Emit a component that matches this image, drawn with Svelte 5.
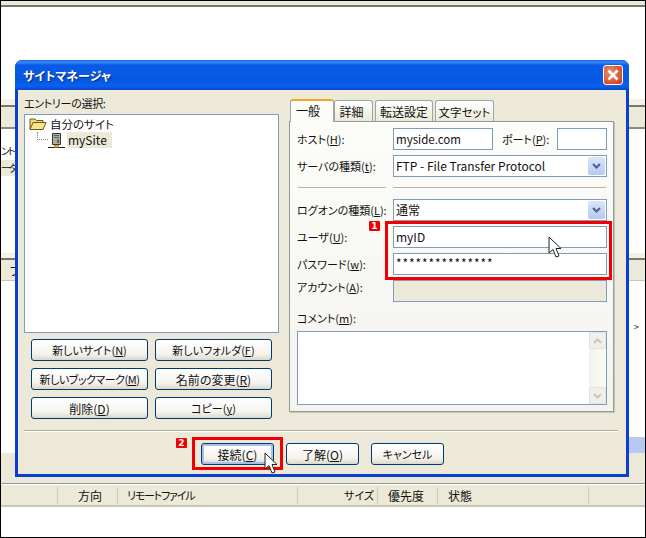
<script>
  const leftButtons = [
    { a: '新しいサイト(', k: 'N' },
    { a: '新しいフォルダ(', k: 'F' },
    { a: '新しいブックマーク(', k: 'M', tight: true },
    { a: '名前の変更(', k: 'R', kanji: true },
    { a: '削除(', k: 'D', kanji: true },
    { a: 'コピー(', k: 'y' }
  ];
  const tabs = ['一般', '詳細', '転送設定', '文字セット'];
</script>

{#snippet cursor()}
  <svg class="cursor" width="15" height="24" viewBox="0 0 15 24">
    <path d="M1 1 L1 17 L5 13.5 L8 21 L11 20 L8 12.5 L13 12.5 Z" fill="#fff" stroke="#222" stroke-width="1" />
  </svg>
{/snippet}

{#snippet arrow()}
  <span class="drop">
    <svg width="9" height="6" viewBox="0 0 9 6"><path d="M1 1 L4.5 4.5 L8 1" fill="none" stroke="#4d6185" stroke-width="2" /></svg>
  </span>
{/snippet}

<div class="screen">
  <div class="top-strip"></div>

  <div class="band-top"></div>
  <div class="back-pane">
    <div class="back-row">ント</div>
    <div class="back-row shaded">ータ</div>
  </div>
  <div class="band-mid"><span>フ</span></div>
  <div class="back-lower">
    <span class="chevron">&gt;</span>
  </div>
  <div class="back-select"></div>
  <div class="back-beige"></div>
  <div class="queue-head">
    <span class="col c0"></span>
    <span class="col c1">方向</span>
    <span class="col c2">リモートファイル</span>
    <span class="col c3">サイズ</span>
    <span class="col c4">優先度</span>
    <span class="col c5">状態</span>
  </div>

  <section class="dialog">
    <header class="title">
      <h1>サイトマネージャ</h1>
      <span class="close">
        <svg width="14" height="14" viewBox="0 0 14 14"><path d="M2.5 2.5 L11.5 11.5 M11.5 2.5 L2.5 11.5" stroke="#fff" stroke-width="2.6" /></svg>
      </span>
    </header>

    <div class="body">
      <div class="columns">
        <div class="left">
          <div class="entry-label">エントリーの選択:</div>
          <div class="tree">
            <div class="node">
              <svg width="18" height="14" viewBox="0 0 18 14">
                <path d="M1 12 V2 H6 L7.5 3.5 H14 V5" fill="#f3dc7c" stroke="#6b5a16" />
                <path d="M1 12.5 L4 5.5 H17 L14 12.5 Z" fill="#f8e48c" stroke="#6b5a16" />
              </svg>
              <span>自分のサイト</span>
            </div>
            <div class="node child">
              <span class="dots"></span>
              <svg width="17" height="16" viewBox="0 0 17 16">
                <path d="M4.5 1.5 H12.5 V12.5 H4.5 Z" fill="#a9aeaa" stroke="#34383a" />
                <path d="M6 3.5 H11 M6 5.5 H11" stroke="#5c6062" />
                <rect x="9" y="7" width="2" height="2" fill="#19b01e" />
                <rect x="9" y="9" width="2" height="2" fill="#d7261e" />
                <path d="M0 15.5 H17" stroke="#222" />
                <rect x="6.5" y="13" width="4" height="2.5" fill="#e0b93a" stroke="#6b5a16" stroke-width=".5" />
              </svg>
              <span class="picked">mySite</span>
            </div>
          </div>
          <div class="site-buttons">
            {#each leftButtons as b}
              <button type="button" class:tight={b.tight} class:kanji={b.kanji}>{b.a}<u>{b.k}</u>)</button>
            {/each}
          </div>
        </div>

        <div class="right">
          <div class="tabs">
            {#each tabs as tab, i}
              <span class="tab t{i}" class:active={i === 0}>{tab}</span>
            {/each}
          </div>
          <div class="panel">
            <div class="row">
              <span class="lbl">ホスト(<u>H</u>):</span>
              <span class="field host">myside.com</span>
              <span class="lbl port">ポート(<u>P</u>):</span>
              <span class="field portbox"></span>
            </div>
            <div class="row">
              <span class="lbl">サーバの種類(<u>t</u>):</span>
              <span class="field grow">FTP - File Transfer Protocol{@render arrow()}</span>
            </div>
            <div class="seps"><i></i><i></i></div>
            <div class="row">
              <span class="lbl">ログオンの種類(<u>L</u>):</span>
              <span class="field grow">通常{@render arrow()}</span>
            </div>
            <div class="row">
              <span class="lbl">ユーザ(<u>U</u>):</span>
              <span class="field grow">myID</span>
            </div>
            <div class="row">
              <span class="lbl">パスワード(<u>w</u>):</span>
              <span class="field grow stars">***************</span>
            </div>
            <div class="row">
              <span class="lbl raised">アカウント(<u>A</u>):</span>
              <span class="field grow off"></span>
            </div>
            <div class="comment-label">コメント(<u>m</u>):</div>
            <div class="comment">
              <div class="scroll">
                <span class="sb-btn">
                  <svg width="9" height="6" viewBox="0 0 9 6"><path d="M1 5 L4.5 1.5 L8 5" fill="none" stroke="#c6c6be" stroke-width="2" /></svg>
                </span>
                <span class="sb-btn">
                  <svg width="9" height="6" viewBox="0 0 9 6"><path d="M1 1 L4.5 4.5 L8 1" fill="none" stroke="#c6c6be" stroke-width="2" /></svg>
                </span>
              </div>
            </div>
          </div>
        </div>
      </div>

      <div class="rule"></div>
      <div class="actions">
        <button type="button" class="focus kanji">接続(<u>C</u>)</button>
        <button type="button" class="kanji">了解(<u>O</u>)</button>
        <button type="button">キャンセル</button>
      </div>
    </div>
  </section>

  <div class="redbox one"></div>
  <span class="badge b1">1</span>
  <div class="redbox two"></div>
  <span class="badge b2">2</span>
  <div class="cursor-at a">{@render cursor()}</div>
  <div class="cursor-at b">{@render cursor()}</div>
</div>

<style>
  :global(body) {
    margin: 0;
    background: #fff;
  }

  .screen {
    position: relative;
    width: 646px;
    height: 538px;
    box-sizing: border-box;
    border: 1px solid #000;
    background: #fff;
    overflow: hidden;
    font-family: "Noto Sans CJK JP", "Noto Sans", sans-serif;
    font-feature-settings: "palt";
    font-size: 12px;
    color: #111;
    display: flex;
    flex-direction: column;
  }

  .top-strip {
    height: 4px;
    background: #ece9d8;
    border-bottom: 2px solid #77776e;
    flex: none;
    box-sizing: content-box;
  }

  .band-top {
    margin-top: 92px;
    height: 30px;
    box-sizing: border-box;
    flex: none;
    background: linear-gradient(#f4f2e6 0 6px, #77776e 6px 8px, #ece9d8 8px);
    border-bottom: 2px solid #8a8a80;
  }

  .back-pane {
    height: 124px;
    padding-top: 14px;
    box-sizing: border-box;
    flex: none;
  }

  .back-row {
    width: 14px;
    height: 16px;
    white-space: nowrap;
    font-size: 10px;
    letter-spacing: -2px;
    line-height: 16px;
  }

  .shaded {
    margin-top: 1px;
    background: #ece9d8;
  }

  .band-mid {
    height: 28px;
    box-sizing: border-box;
    flex: none;
    padding: 9px 0 0 9px;
    line-height: 18px;
    background: linear-gradient(#f4f2e6 0 5px, #77776e 5px 7px, #ece9d8 7px);
    border-bottom: 1px solid #c9c6b6;
  }

  .back-lower {
    height: 156px;
    position: relative;
    flex: none;
  }

  .chevron {
    position: absolute;
    right: 6px;
    top: 40px;
    font-size: 9px;
    line-height: 12px;
  }

  .back-select {
    height: 16px;
    box-sizing: border-box;
    margin-left: 600px;
    background: #b8c8f4;
    border-top: 1px solid #c8c8d0;
    flex: none;
  }

  .back-beige {
    height: 31px;
    box-sizing: border-box;
    background: #ece9d8;
    border-bottom: 1px solid #8f9aa0;
    flex: none;
  }

  .queue-head {
    display: flex;
    align-items: center;
    height: 23px;
    box-sizing: border-box;
    background: #ece9d8;
    border-top: 1px solid #fff;
    border-bottom: 2px solid #c9c6b6;
    flex: none;
  }

  .col {
    height: 17px;
    line-height: 17px;
    box-sizing: border-box;
    border-right: 1px solid #cfccbc;
    white-space: nowrap;
    flex: none;
  }

  .c0 { width: 57px; }
  .c1 { width: 60px; padding-left: 20px; }
  .c2 { width: 180px; padding-left: 9px; font-size: 11px; letter-spacing: -1.2px; }
  .c3 { width: 80px; padding-left: 46px; font-size: 11px; }
  .c4 { width: 60px; padding-left: 10px; }
  .c5 { width: 151px; padding-left: 10px; }

  .dialog {
    position: absolute;
    left: 14px;
    top: 59px;
    width: 614px;
    height: 417px;
    box-sizing: border-box;
    background: #0a3fd0;
    border-radius: 7px 7px 0 0;
    display: flex;
    flex-direction: column;
    padding: 0 3px 3px;
  }

  .title {
    margin: 0 -3px;
    height: 30px;
    flex: none;
    border-radius: 7px 7px 0 0;
    background: linear-gradient(#0a5fe4 0, #3c8cf4 2px, #0a5ae8 5px, #0658e0 20px, #0a60f0 26px, #0a46c8 30px);
    display: flex;
    align-items: center;
    justify-content: space-between;
    padding: 0 6px 0 8px;
  }

  h1 {
    margin: 0;
    font-size: 12px;
    font-weight: 700;
    color: #fff;
    text-shadow: 1px 1px 1px #0a2a80;
  }

  .close {
    width: 20px;
    height: 20px;
    box-sizing: border-box;
    border: 1px solid #fff;
    border-radius: 3px;
    background: radial-gradient(circle at 35% 35%, #e8906c, #d8502c 70%, #c03c18);
    display: flex;
    align-items: center;
    justify-content: center;
  }

  .body {
    flex: 1;
    background: #ece9d8;
    padding: 3px 6px 0;
    display: flex;
    flex-direction: column;
  }

  .columns {
    display: flex;
    height: 336px;
    flex: none;
  }

  .left {
    width: 255px;
    flex: none;
    font-size: 11px;
  }

  .entry-label {
    height: 21px;
    line-height: 20px;
    letter-spacing: -.3px;
  }

  .tree {
    height: 219px;
    box-sizing: border-box;
    background: #fff;
    border: 1px solid #7f9db9;
    padding: 1px 4px;
    font-size: 11.5px;
  }

  .node {
    display: flex;
    align-items: center;
    height: 16px;
    gap: 3px;
  }

  .child {
    padding-left: 8px;
    gap: 0;
    font-size: 12px;
  }

  .dots {
    width: 11px;
    height: 8px;
    align-self: flex-start;
    box-sizing: border-box;
    border-left: 1px dotted #888;
    border-bottom: 1px dotted #888;
  }

  .picked {
    background: #ece9d8;
    margin-left: 2px;
    padding: 0 5px 0 1px;
    line-height: 16px;
  }

  .site-buttons {
    display: grid;
    grid-template-columns: 117px 117px;
    grid-auto-rows: 22px;
    gap: 7px;
    padding: 6px 0 0 7px;
  }

  button {
    font: inherit;
    font-size: 11px;
    font-feature-settings: inherit;
    color: inherit;
    padding: 0;
    border: 1px solid #003c74;
    border-radius: 3px;
    background: linear-gradient(#fff, #f4f3ee 70%, #dcd8c8);
    white-space: nowrap;
  }

  button.tight {
    letter-spacing: -.5px;
  }

  button.kanji {
    font-size: 12px;
  }

  .right {
    margin-left: 10px;
    width: 325px;
    flex: none;
    display: flex;
    flex-direction: column;
    padding-top: 7px;
  }

  .tabs {
    display: flex;
    height: 21px;
    position: relative;
    z-index: 1;
    padding-left: 1px;
    flex: none;
  }

  .tab {
    height: 21px;
    line-height: 22px;
    text-align: center;
    box-sizing: border-box;
    border: 1px solid #9aa7a8;
    border-bottom: none;
    border-radius: 3px 3px 0 0;
    background: linear-gradient(#fff, #ece9d8);
    flex: none;
  }

  .t0 { width: 44px; padding-right: 8px; }
  .t1 { width: 39px; padding-right: 4px; }
  .t2 { width: 58px; margin-left: 2px; }
  .t3 { width: 59px; margin-left: 2px; font-size: 11.5px; }

  .active {
    height: 23px;
    margin-top: -1px;
    background: #fcfcf9;
    border-top: 2px solid #f5a623;
    line-height: 20px;
  }

  .panel {
    height: 291px;
    box-sizing: border-box;
    border: 1px solid #919b9c;
    box-shadow: 1px 1px 0 #c8c5b4;
    background: linear-gradient(#fcfcf9, #f4f3ee);
    padding: 6px 6px 0 7px;
    flex: none;
  }

  .row {
    display: flex;
    align-items: center;
    height: 22px;
    margin-bottom: 5px;
  }

  .lbl {
    width: 96px;
    flex: none;
    white-space: nowrap;
    font-size: 11px;
  }

  .raised {
    padding-bottom: 8px;
  }

  .port {
    width: auto;
    margin: 0 auto 0 9px;
  }

  .field {
    height: 22px;
    line-height: 20px;
    box-sizing: border-box;
    border: 1px solid #7f9db9;
    background: #fff;
    padding: 0 2px;
    position: relative;
  }

  .host { width: 100px; font-size: 11.5px; }
  .portbox { width: 50px; }
  .grow { flex: 1; }
  .off { background: #ece9d8; }
  .stars { letter-spacing: .9px; line-height: 17px; }

  .drop {
    position: absolute;
    right: 1px;
    top: 1px;
    width: 17px;
    height: 18px;
    border-radius: 2px;
    background: linear-gradient(#dbe5fb, #b6c8f2);
    display: flex;
    align-items: center;
    justify-content: center;
  }

  .seps {
    display: flex;
    gap: 7px;
    height: 17px;
    padding-top: 5px;
    box-sizing: border-box;
  }

  .seps i {
    height: 1px;
    background: #b4b2a4;
    box-shadow: 0 1px 0 #fff;
  }

  .seps i:first-child { width: 88px; margin-left: 1px; }
  .seps i:last-child { width: 213px; }

  .comment-label {
    height: 24px;
    line-height: 22px;
    font-size: 11px;
  }

  .comment {
    height: 74px;
    width: 310px;
    box-sizing: border-box;
    border: 1px solid #7f9db9;
    background: #fff;
    display: flex;
    justify-content: flex-end;
  }

  .scroll {
    width: 17px;
    background: linear-gradient(90deg, #f2f2ec, #fbfbf8);
    display: flex;
    flex-direction: column;
    justify-content: space-between;
  }

  .sb-btn {
    height: 17px;
    box-sizing: border-box;
    border: 1px solid #e4e4dc;
    border-radius: 2px;
    background: #f0f0ea;
    display: flex;
    align-items: center;
    justify-content: center;
  }

  .rule {
    height: 1px;
    background: #aca899;
    box-shadow: 0 1px 0 #fff;
    margin-top: 1px;
    margin-right: 2px;
    flex: none;
  }

  .actions {
    display: grid;
    grid-template-columns: 73px 73px 73px;
    grid-auto-rows: 22px;
    gap: 12px;
    padding: 12px 0 0 177px;
  }

  .focus {
    box-shadow: inset 0 0 0 2px #a8c0ec;
  }

  .redbox {
    position: absolute;
    box-sizing: border-box;
    border: 3px solid #f00000;
  }

  .one {
    left: 384px;
    top: 220px;
    width: 227px;
    height: 59px;
  }

  .two {
    left: 191px;
    top: 436px;
    width: 91px;
    height: 33px;
  }

  .badge {
    position: absolute;
    width: 11px;
    height: 10px;
    background: #f00000;
    color: #fff;
    font-family: "DejaVu Sans", sans-serif;
    font-size: 9px;
    font-weight: 700;
    line-height: 10px;
    text-align: center;
    border-radius: 1px;
  }

  .b1 { left: 368px; top: 220px; }
  .b2 { left: 175px; top: 437px; }

  .cursor-at {
    position: absolute;
    line-height: 0;
  }

  .a { left: 547px; top: 235px; }
  .b { left: 263px; top: 451px; }
</style>
